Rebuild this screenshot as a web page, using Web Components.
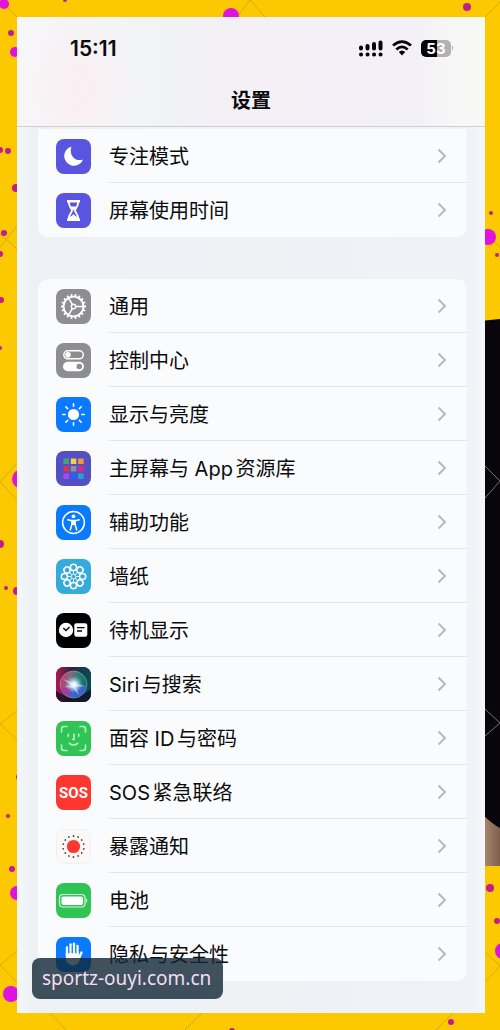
<!DOCTYPE html>
<html lang="zh-CN">
<head>
<meta charset="utf-8">
<meta name="viewport" content="width=device-width, initial-scale=1">
<title>设置</title>
<style>
  html, body {
    margin: 0;
    min-height: 100%;
  }

  body {
    position: relative;
    background: #fcc800;
    color: #0b0b0c;
    font-family: Inter, "Noto Sans CJK SC", sans-serif;
    font-size: 20px;
  }
</style>
</head>
<body>
  <poster-backdrop></poster-backdrop>
  <phone-screen>
    <nav-header slot="header" time="15:11" battery="53">设置</nav-header>
    <settings-group class="first">
      <settings-row icon="moon">专注模式</settings-row>
      <settings-row icon="hourglass" last>屏幕使用时间</settings-row>
    </settings-group>
    <settings-group>
      <settings-row icon="gear">通用</settings-row>
      <settings-row icon="toggles">控制中心</settings-row>
      <settings-row icon="sun">显示与亮度</settings-row>
      <settings-row icon="apps">主屏幕与 App资源库</settings-row>
      <settings-row icon="person">辅助功能</settings-row>
      <settings-row icon="flower">墙纸</settings-row>
      <settings-row icon="standby">待机显示</settings-row>
      <settings-row icon="siri">Siri与搜索</settings-row>
      <settings-row icon="face">面容 ID与密码</settings-row>
      <settings-row icon="sos">SOS紧急联络</settings-row>
      <settings-row icon="exposure">暴露通知</settings-row>
      <settings-row icon="battery">电池</settings-row>
      <settings-row icon="hand" last>隐私与安全性</settings-row>
    </settings-group>
  </phone-screen>
  <site-badge>sportz-ouyi.com.cn</site-badge>

<script>
// repeat a piece of svg around the centre of a 35x35 icon
const around = (count, shape) => Array.from({ length: count }, (_, i) =>
  `<g transform="rotate(${i * 360 / count} 17.5 17.5)">${shape}</g>`).join('');

const ICONS = {
  moon: ['#5a55e0', `<path fill="#fff" d="M15.5 7.6A9.7 9.7 0 1 0 27 20.4C19.5 23.4 12.4 16.3 15.5 7.6Z"/>`],
  hourglass: ['#5a55e0', `
    <path fill="none" stroke="#fff" stroke-width="1.9" d="M12.8 9C12.8 14 16 15.5 16 17.5S12.8 21 12.8 26M22.2 9C22.2 14 19 15.5 19 17.5S22.2 21 22.2 26"/>
    <path fill="#fff" d="M11 7H24V9.5H11ZM11 25.5H24V28H11ZM14 13.5H21L17.5 17.5ZM13.5 25.5C14 22.5 17.5 22.5 17.5 20.5C17.5 22.5 21 22.5 21.5 25.5Z"/>`],
  gear: ['#8e8e90', `
    <g fill="none" stroke="#fff">
      <circle cx="17.5" cy="17.5" r="9.9" stroke-width="1.8"/>
      <circle cx="17.5" cy="17.5" r="2.2" stroke-width="1.4"/>
      <g stroke-width="1.5">${around(3, '<path d="M19.9 17.5H27"/>')}</g>
      <g stroke-width="1.8">${around(18, '<path d="M27.5 17.5H30"/>')}</g>
    </g>`],
  toggles: ['#8e8e90', `
    <rect x="7.8" y="7.8" width="19.5" height="8" rx="4" fill="none" stroke="#fff" stroke-width="1.5"/>
    <circle cx="12" cy="11.8" r="2.8" fill="#fff"/>
    <rect x="7" y="18.8" width="21" height="9.4" rx="4.7" fill="#fff"/>
    <circle cx="23.3" cy="23.5" r="2.8" fill="#8e8e90"/>`],
  sun: ['#0a7aff', `
    <circle cx="17.5" cy="17.5" r="5.6" fill="#fff"/>
    <g stroke="#fff" stroke-width="1.6" stroke-linecap="round">${around(8, '<path d="M17.5 6.8V9.2"/>')}</g>`],
  apps: ['#554fc4', `
    <path fill="#3fa477" d="M7.5 7.5h5.5v5.5h-5.5z"/><path fill="#ffc94f" d="M14.8 7.5h5.5v5.5h-5.5z"/><path fill="#f1973b" d="M22.1 7.5h5.5v5.5h-5.5z"/>
    <path fill="#dc3450" d="M7.5 15h5.5v5.5h-5.5z"/><path fill="#8f8da5" d="M14.8 15h5.5v5.5h-5.5z"/><path fill="#d82e70" d="M22.1 15h5.5v5.5h-5.5z"/>
    <path fill="#aa46ef" d="M7.5 22.5h5.5v5.5h-5.5z"/><path fill="#1c66f2" d="M14.8 22.5h5.5v5.5h-5.5z"/><path fill="#24a3cb" d="M22.1 22.5h5.5v5.5h-5.5z"/>`],
  person: ['#0a7aff', `
    <circle cx="17.5" cy="17.5" r="10.9" fill="none" stroke="#fff" stroke-width="1.5"/>
    <circle cx="17.5" cy="11.3" r="1.9" fill="#fff"/>
    <path d="M11.8 14.8L16 15.8V19L14.3 25M23.2 14.8L19 15.8V19L20.7 25" fill="none" stroke="#fff" stroke-width="1.5" stroke-linecap="round" stroke-linejoin="round"/>
    <path fill="#fff" d="M15.5 14.7H19.5V20H15.5Z"/>`],
  flower: ['#35aadc', `
    <g fill="none" stroke="#fff" stroke-width="1.5">${around(8, '<circle cx="17.5" cy="8.4" r="3.1"/>')}</g>
    <g stroke="#fff" stroke-width="1">${around(8, '<path d="M17.5 11.5V15"/>')}</g>
    <circle cx="17.5" cy="17.5" r="2.2" fill="none" stroke="#d9f3fc"/>`],
  standby: ['#000', `
    <circle cx="10" cy="17" r="7.2" fill="#fff"/>
    <path d="M7.3 15L10 17.5L13.5 14" fill="none" stroke="#000" stroke-width="1.3"/>
    <rect x="18.3" y="10.3" width="13" height="13.4" rx="2" fill="#fff"/>
    <path d="M21 14.6H28.5M21 18H26" stroke="#000" stroke-width="1.3"/>`],
  siri: ['#15162a', `
    <defs>
      <linearGradient id="side"><stop offset="0" stop-color="#b3164e"/><stop offset=".45" stop-color="#29293e"/><stop offset="1" stop-color="#064b56"/></linearGradient>
      <radialGradient id="glow"><stop offset="0" stop-color="#fff"/><stop offset=".3" stop-color="#e8f6ff" stop-opacity=".9"/><stop offset="1" stop-color="#8bd8ff" stop-opacity="0"/></radialGradient>
      <linearGradient id="orb" x2="1" y2=".2"><stop offset="0" stop-color="#d9296f"/><stop offset=".4" stop-color="#8a6682"/><stop offset=".65" stop-color="#347d76"/><stop offset="1" stop-color="#0d7468"/></linearGradient>
    </defs>
    <rect width="35" height="35" fill="url(#side)"/>
    <path d="M0 24Q18 37 35 22V35H0Z" fill="#111027" opacity=".8"/>
    <circle cx="17.5" cy="17.5" r="13.5" fill="url(#orb)" stroke="#94a6ae" stroke-opacity=".65"/>
    <path d="M4.500 21L18 18L12 29Q6 27 4.500 21Z" fill="#a53c9c"/>
    <path d="M18 18L30.500 19Q29 27 22 30Q17 31 12 29Z" fill="#3f62ca"/>
    <path d="M7 12L18 16L29 19L20 20L23 28L17 21L8 20L15 18Z" fill="#f0f9ff" opacity=".55"/>
    <circle cx="18" cy="17.5" r="8.500" fill="url(#glow)"/>`],
  face: ['#30c454', `
    <g fill="none" stroke="#b9f4c5" stroke-width="1.6" stroke-linecap="round">
      <path d="M5.500 11V8Q5.500 5.500 8 5.500H11M24 5.500H27Q29.500 5.500 29.500 8V11M29.500 24V27Q29.500 29.500 27 29.500H24M11 29.500H8Q5.500 29.500 5.500 27V24"/>
      <path d="M12.3 13.3V15.3M22.7 13.3V15.3M18 13.3V18.5H16.8M13.3 22.3Q17.5 25.7 21.7 22.3"/>
    </g>`],
  sos: ['#fd372f', `<text x="17.5" y="23" text-anchor="middle" fill="#fff" font-family="'Liberation Sans Narrow', Roboto, sans-serif" font-size="15" font-weight="700">SOS</text>`],
  exposure: ['#fbf8f8', `
    <rect x=".5" y=".5" width="34" height="34" rx="7.5" fill="none" stroke="#f1eff1"/>
    <circle cx="17.5" cy="17.5" r="6.6" fill="#fc392c"/>
    <g fill="#6d3436">${around(14, '<circle cx="17.5" cy="7" r="0.9"/>')}</g>`],
  battery: ['#30c454', `
    <rect x="3.5" y="11.5" width="25.5" height="12.5" rx="3.5" fill="none" stroke="#d7fadd" stroke-width="1.2"/>
    <rect x="5.5" y="13.5" width="21.5" height="8.5" rx="1.8" fill="#fff"/>
    <path d="M30 15.5Q32.5 17.7 30 20Z" fill="#d7fadd"/>`],
  hand: ['#0a7aff', `
    <g fill="none" stroke="#fff" stroke-width="2.4" stroke-linecap="round"><path d="M11 10.5V19M14.5 7.5V18M18 6.7V18M21.5 9V19M25.5 15.5L22.5 22"/></g>
    <path fill="#fff" d="M9.8 16H22.7V20L25 17.5Q24 28 17 28.5Q9.8 28 9.8 20Z"/>
    <path d="M12.75 9V16.5M16.25 9V16.5M19.75 9V16.5" stroke="#0a7aff" stroke-width=".8"/>`],
};

class PosterBackdrop extends HTMLElement {
  constructor() {
    super();
    this.attachShadow({ mode: 'open' });
  }

  connectedCallback() {
    // x, y, radius
    const dots = [
      [4, 4, 5], [65, 0, 2], [231, 16, 8], [11, 33, 3], [15, 52, 5], [0, 150, 3], [8, 151, 3],
      [16, 188, 4], [4, 233, 3], [0, 254, 3], [1, 300, 3], [0, 348, 2], [22, 479, 10],
      [0, 544, 4], [6, 588, 2], [17, 591, 4], [19, 777, 3], [8, 816, 2], [12, 869, 3],
      [17, 893, 7], [11, 994, 8], [467, 7, 4], [491, 213, 2], [488, 237, 8], [497, 255, 2],
      [490, 888, 4], [497, 921, 3], [503, 951, 8], [451, 1022, 3], [232, 1031, 3],
    ];
    this.shadowRoot.innerHTML = `
      <style>
        :host {
          position: absolute;
          inset: 0;
          overflow: hidden;
        }
        svg {
          display: block;
          width: 100%;
          height: 100%;
        }
      </style>
      <svg viewBox="0 0 500 1030" preserveAspectRatio="none" aria-hidden="true">
        <defs><linearGradient id="skin"><stop offset="0" stop-color="#b0907a"/><stop offset="1" stop-color="#80604c"/></linearGradient></defs>
        <path fill="url(#skin)" d="M480 800H500V866H480Z"/>
        <path fill="#08060a" d="M480 321L500 319V828Q492 824 480 812Z"/>
        <g fill="none" stroke="#d8ab0c">
          <path d="M18 462L0 482L18 501M18 710L0 724L18 741M18 950L0 965L18 983M0 234L18 250M18 225L0 247"/>
          <path d="M250 0L265 17M485 17L500 2M0 0L18 18M237 17L250 0M50 1013L66 1030M202 1013L185 1030M485 952L500 966L485 982M452 1014L436 1030M485 232L500 247"/>
          <path stroke="#77727a" d="M485 466L500 481L485 498M485 709L500 723L485 736"/>
        </g>
        ${dots.map(([x, y, r]) => `<circle cx="${x}" cy="${y}" r="${r}" fill="${r > 4 ? '#df12df' : '#c11d91'}"/>`).join('')}
      </svg>
    `;
  }
}

class PhoneScreen extends HTMLElement {
  constructor() {
    super();
    this.attachShadow({ mode: 'open' }).innerHTML = `
      <style>
        :host {
          display: block;
          position: relative;
          padding: 17px 15px 17px 17px;
        }
        .screen {
          background: linear-gradient(90deg, #f5f7fa, #edf1f5 16px, #eff1f5 50%, #eff2f7 450px, #f5f6fb);
          padding-bottom: 32px;
        }
        main {
          display: grid;
          gap: 42px;
          padding: 2px 18px 0 21px;
        }
      </style>
      <div class="screen">
        <slot name="header"></slot>
        <main><slot></slot></main>
      </div>
    `;
  }
}

class NavHeader extends HTMLElement {
  constructor() {
    super();
    this.attachShadow({ mode: 'open' });
  }

  connectedCallback() {
    this.shadowRoot.innerHTML = `
      <style>
        :host {
          display: block;
          border-bottom: 1px solid #d0ced8;
          background:
            radial-gradient(ellipse 60px 80px at 60px 70px, #fbeef1, transparent),
            linear-gradient(90deg, #f7f6f9, #f1f3f5 130px, #f4f0f6 230px, #f4f0f7 400px, #f7f8f6 440px);
        }
        .status {
          display: flex;
          align-items: center;
          gap: 9px;
          height: 62px;
          padding: 0 32px 0 53px;
        }
        time {
          flex: 1;
          font-size: 21px;
          font-weight: 600;
        }
        svg {
          display: block;
        }
        .battery {
          display: flex;
          align-items: center;
          gap: 1px;
        }
        .level {
          width: 30px;
          border-radius: 5px;
          background: linear-gradient(90deg, #050505 53%, #b2b1b4 53%);
          color: #fff;
          font-size: 15px;
          font-weight: 700;
          line-height: 17px;
          text-align: center;
        }
        .cap {
          width: 1px;
          height: 4px;
          background: #b2b1b4;
        }
        h1 {
          margin: 0;
          padding-bottom: 3px;
          font-size: 20px;
          font-weight: 700;
          line-height: 44px;
          text-align: center;
        }
      </style>
      <div class="status">
        <time>${this.getAttribute('time')}</time>
        <svg width="24" height="17" viewBox="0 0 24 17" aria-hidden="true">
          <g stroke="#050505" stroke-width="4" stroke-linecap="round">
            <path d="M2 7.5V8.500M8.500 6V8.500M15 4V8.500M21.500 2.500V8.500M2 14.500h.1M8.500 14.500h.1M15 14.500h.1M21.500 14.500h.1"/>
          </g>
        </svg>
        <svg width="20" height="16" viewBox="0 0 20 16" aria-hidden="true">
          <g fill="none" stroke="#050505" stroke-width="2.7">
            <path d="M1 5.6Q10 -2.5 19 5.6M4.3 9.5Q10 4.2 15.7 9.5"/>
          </g>
          <path fill="#050505" d="M6.8 12Q10 9 13.2 12L10 15.5Z"/>
        </svg>
        <div class="battery"><span class="level">${this.getAttribute('battery')}</span><span class="cap"></span></div>
      </div>
      <h1><slot></slot></h1>
    `;
  }
}

class SettingsGroup extends HTMLElement {
  constructor() {
    super();
    this.attachShadow({ mode: 'open' }).innerHTML = `
      <style>
        :host {
          display: block;
          overflow: hidden;
          border-radius: 10px;
          background: #fafbfd;
        }
        :host(.first) {
          border-radius: 0 0 10px 10px;
        }
      </style>
      <slot></slot>
    `;
  }
}

class SettingsIcon extends HTMLElement {
  constructor() {
    super();
    this.attachShadow({ mode: 'open' });
  }

  connectedCallback() {
    const [color, shape] = ICONS[this.getAttribute('name')];
    this.shadowRoot.innerHTML = `
      <style>
        :host {
          display: block;
          flex: none;
          width: 35px;
          height: 35px;
          overflow: hidden;
          border-radius: 8px;
          background: ${color};
        }
        svg {
          display: block;
        }
      </style>
      <svg width="35" height="35" viewBox="0 0 35 35" aria-hidden="true">${shape}</svg>
    `;
  }
}

class SettingsRow extends HTMLElement {
  constructor() {
    super();
    this.attachShadow({ mode: 'open' });
  }

  connectedCallback() {
    this.shadowRoot.innerHTML = `
      <style>
        :host {
          display: block;
        }
        a {
          display: flex;
          align-items: center;
          gap: 18px;
          padding-left: 18px;
          color: inherit;
          text-decoration: none;
        }
        .content {
          display: flex;
          flex: 1;
          align-items: center;
          justify-content: space-between;
          box-sizing: border-box;
          height: 54px;
          padding-right: 20px;
          border-bottom: 1px solid #e3e5e9;
          text-autospace: normal;
        }
        :host([last]) .content {
          border-bottom-color: transparent;
        }
      </style>
      <a href="#${this.getAttribute('icon')}">
        <settings-icon name="${this.getAttribute('icon')}"></settings-icon>
        <span class="content">
          <span><slot></slot></span>
          <svg width="10" height="16" viewBox="0 0 10 16" aria-hidden="true">
            <path d="M1.5 1.5L8 8L1.5 14.5" fill="none" stroke="#b8b8bb" stroke-width="2"/>
          </svg>
        </span>
      </a>
    `;
  }
}

class SiteBadge extends HTMLElement {
  constructor() {
    super();
    this.attachShadow({ mode: 'open' }).innerHTML = `
      <style>
        :host {
          position: absolute;
          left: 32px;
          bottom: 31px;
          padding: 0 12px 0 10px;
          border-radius: 8px;
          background: rgba(18, 39, 54, 0.8);
          color: #f3dcf3;
          font-family: "Noto Sans", sans-serif;
          font-size: 19px;
          line-height: 41px;
        }
      </style>
      <slot></slot>
    `;
  }
}

customElements.define('poster-backdrop', PosterBackdrop);
customElements.define('phone-screen', PhoneScreen);
customElements.define('nav-header', NavHeader);
customElements.define('settings-group', SettingsGroup);
customElements.define('settings-icon', SettingsIcon);
customElements.define('settings-row', SettingsRow);
customElements.define('site-badge', SiteBadge);
</script>
</body>
</html>
